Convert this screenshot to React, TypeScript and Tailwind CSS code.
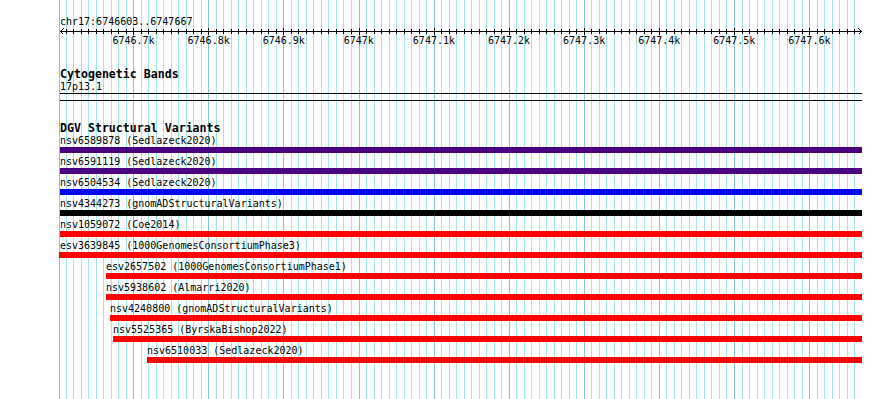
const STEP = 7.51;

// grid lines every 10bp from 6746600, darker every 100bp
const gridLines = Array.from({ length: 107 }, (_, k) => ({
    x: Math.max(59, Math.floor(58.6 + k * STEP)),
    major: k % 10 === 0,
}));

const tickLabels = [
    '6746.7k',
    '6746.8k',
    '6746.9k',
    '6747k',
    '6747.1k',
    '6747.2k',
    '6747.3k',
    '6747.4k',
    '6747.5k',
    '6747.6k',
];

const variants = [
    { id: 'nsv6589878', study: 'Sedlazeck2020', color: 'bg-[#4b0082]', left: 0, barLeft: 0 },
    { id: 'nsv6591119', study: 'Sedlazeck2020', color: 'bg-[#4b0082]', left: 0, barLeft: 0 },
    { id: 'nsv6504534', study: 'Sedlazeck2020', color: 'bg-[#0000ff]', left: 0, barLeft: 0 },
    { id: 'nsv4344273', study: 'gnomADStructuralVariants', color: 'bg-black', left: 0, barLeft: 0 },
    { id: 'nsv1059072', study: 'Coe2014', color: 'bg-[#ff0000]', left: 0, barLeft: 0 },
    { id: 'esv3639845', study: '1000GenomesConsortiumPhase3', color: 'bg-[#ff0000]', left: 0, barLeft: -1 },
    { id: 'esv2657502', study: '1000GenomesConsortiumPhase1', color: 'bg-[#ff0000]', left: 46, barLeft: 46 },
    { id: 'nsv5938602', study: 'Almarri2020', color: 'bg-[#ff0000]', left: 46, barLeft: 46 },
    { id: 'nsv4240800', study: 'gnomADStructuralVariants', color: 'bg-[#ff0000]', left: 50, barLeft: 50 },
    { id: 'nsv5525365', study: 'ByrskaBishop2022', color: 'bg-[#ff0000]', left: 53, barLeft: 53 },
    { id: 'nsv6510033', study: 'Sedlazeck2020', color: 'bg-[#ff0000]', left: 87, barLeft: 87 },
];

function Grid() {
    return (
        <svg
            className="absolute inset-0"
            width={890}
            height={399}
            shapeRendering="crispEdges"
        >
            {gridLines.map((g, i) => (
                <rect
                    key={i}
                    x={g.x}
                    y={0}
                    width={1}
                    height={399}
                    fill={g.major ? '#86c2e2' : '#a2e6ec'}
                />
            ))}
        </svg>
    );
}

function Ruler() {
    return (
        <svg width={802} height={8} className="block" shapeRendering="crispEdges">
            <rect x={0} y={4} width={802} height={1} fill="#000" />
            {gridLines.slice(1, 107).map((g, i) => {
                const major = g.major;
                return (
                    <rect
                        key={i}
                        x={g.x - 60}
                        y={major ? 1 : 2}
                        width={1}
                        height={major ? 7 : 5}
                        fill="#000"
                    />
                );
            })}
            <path d="M3.5 1.5 L0.5 4.5 L3.5 7.5" stroke="#000" fill="none" />
            <path d="M798.5 1.5 L801.5 4.5 L798.5 7.5" stroke="#000" fill="none" />
        </svg>
    );
}

export default function App() {
    return (
        <div className="relative w-[890px] h-[399px] overflow-hidden bg-white text-black font-['DejaVu_Sans_Mono',monospace]">
            <Grid />
            <div className="relative w-[862px] pl-[60px] pt-[16px] flex flex-col">
                <div className="text-[10px] leading-[11px] whitespace-pre">
                    chr17:6746603..6747667
                </div>
                <Ruler />
                <div className="flex pl-[36px] text-[10px] leading-[11px]">
                    {tickLabels.map(t => (
                        <div key={t} className="w-[75.1px] shrink-0 text-center whitespace-pre">
                            {t}
                        </div>
                    ))}
                </div>

                <div className="mt-[22px] text-[11.6px] leading-[12px] font-bold whitespace-pre">
                    Cytogenetic Bands
                </div>
                <div className="mt-[1px] text-[10px] leading-[11px] whitespace-pre">
                    17p13.1
                </div>
                <div className="mt-[1px] h-[8px] border-y border-black" />

                <div className="mt-[21px] text-[11.6px] leading-[12px] font-bold whitespace-pre">
                    DGV Structural Variants
                </div>
                <div className="mt-[1px] flex flex-col">
                    {variants.map(v => (
                        <div key={v.id} className="flex flex-col pb-[3px]">
                            <div
                                className="text-[10px] leading-[11px] whitespace-pre"
                                style={{ marginLeft: v.left }}
                            >
                                {v.id} ({v.study})
                            </div>
                            <div
                                className={`mt-[1px] h-[6px] ${v.color}`}
                                style={{ marginLeft: v.barLeft }}
                            />
                        </div>
                    ))}
                </div>
            </div>
        </div>
    );
}
